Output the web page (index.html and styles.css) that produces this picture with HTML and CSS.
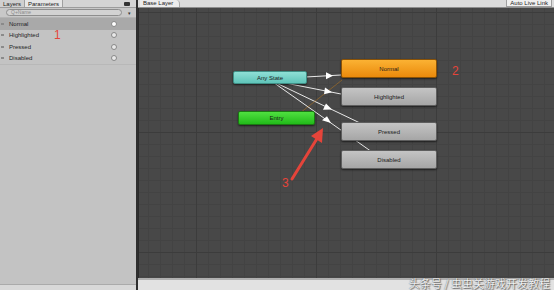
FILE: index.html
```html
<!DOCTYPE html>
<html>
<head>
<meta charset="utf-8">
<link rel="stylesheet" href="styles.css">
</head>
<body>
<div class="app">
  <aside class="left">
    <div class="tabbar">
      <span class="tab">Layers</span>
      <span class="tab active">Parameters</span>
      <span class="spacer"></span>
      <span class="eye"></span>
    </div>
    <div class="searchrow">
      <span class="search">Q+Name</span>
      <span class="plus">▾</span>
    </div>
    <div class="row selected"><span class="grip"></span><span class="name">Normal</span><span class="radio"></span></div>
    <div class="row"><span class="grip"></span><span class="name">Highlighted</span><span class="radio"></span></div>
    <div class="row"><span class="grip"></span><span class="name">Pressed</span><span class="radio"></span></div>
    <div class="row"><span class="grip"></span><span class="name">Disabled</span><span class="radio"></span></div>
    <div class="leftfill"></div>
    <div class="leftfoot"></div>
    <span class="mark mark1">1</span>
  </aside>
  <div class="divider"></div>
  <main class="right">
    <div class="topbar">
      <span class="layer">Base Layer</span>
      <span class="spacer"></span>
      <span class="live">Auto Live Link</span>
    </div>
    <div class="graph">
      <svg class="links" width="416" height="271" viewBox="138 8 416 271">
        <g stroke="#e8e8e8" stroke-width="1" fill="none">
          <line x1="270" y1="79" x2="341" y2="75"/>
          <line x1="270" y1="80" x2="341" y2="94"/>
          <line x1="270" y1="80" x2="360" y2="123"/>
          <line x1="270" y1="80" x2="372" y2="152"/>
        </g>
        <line x1="300" y1="113" x2="342" y2="80" stroke="#c07a1c" stroke-width="1" opacity="0.5"/>
        <g fill="#ffffff">
          <polygon points="333,75.8 326,72.2 326,79.2"/>
          <polygon points="332,92.2 325,87.4 324,94.2"/>
          <polygon points="332,109.6 326,103.5 323,109.8"/>
          <polygon points="331,123.1 327,116.2 322,120.3"/>
        </g>
        <g stroke="#e5443a" stroke-width="3" stroke-linecap="round">
          <line x1="292" y1="179" x2="318" y2="137"/>
        </g>
        <polygon points="323,128 322,143 311,136" fill="#e5443a"/>
      </svg>
      <div class="node any">Any State</div>
      <div class="node normal">Normal</div>
      <div class="node gray hl">Highlighted</div>
      <div class="node entry">Entry</div>
      <div class="node gray pressed">Pressed</div>
      <div class="node gray disabled">Disabled</div>
      <span class="mark mark2">2</span>
      <span class="mark mark3">3</span>
    </div>
    <div class="bottombar"></div>
    <span class="watermark">头条号 / 虫虫关游戏开发教程</span>
  </main>
</div>
</body>
</html>
```
FILE: styles.css
```css
* { box-sizing: border-box; }
html, body { margin: 0; padding: 0; }
body {
  width: 554px;
  height: 290px;
  overflow: hidden;
  font-family: "Liberation Sans", Arial, sans-serif;
  background: #c2c2c2;
}
.app {
  display: flex;
  width: 554px;
  height: 290px;
}
.left {
  position: relative;
  width: 136px;
  display: flex;
  flex-direction: column;
  background: #c3c3c3;
}
.tabbar {
  height: 8px;
  display: flex;
  align-items: stretch;
  background: #d4d4d4;
  border-bottom: 1px solid #9c9c9c;
  font-size: 6px;
  line-height: 8px;
  color: #222;
}
.tab {
  padding: 0 3px;
  border-right: 1px solid #a0a0a0;
  background: #d0d0d0;
}
.tab.active { background: #e6e6e6; }
.spacer { flex: 1; }
.eye {
  width: 6px;
  height: 4px;
  margin: 2px 6px 0 0;
  background: #333;
  border-radius: 1px;
}
.searchrow {
  height: 10px;
  display: flex;
  align-items: center;
  padding: 0 5px 0 6px;
  background: #c8c8c8;
  border-bottom: 1px solid #b4b4b4;
}
.search {
  flex: 1;
  height: 7px;
  border: 1px solid #8e8e8e;
  border-radius: 4px;
  background: #d2d2d2;
  font-size: 5px;
  line-height: 5px;
  color: #8a8a8a;
  padding-left: 4px;
}
.plus {
  font-size: 5px;
  color: #333;
  margin-left: 6px;
}
.row {
  height: 11.5px;
  display: flex;
  align-items: center;
  font-size: 6px;
  color: #1e1e1e;
  padding-right: 19px;
}
.row.selected { background: #a9a9a9; }
.grip {
  width: 3px;
  height: 2px;
  border-top: 1px solid #8a8a8a;
  border-bottom: 1px solid #8a8a8a;
  margin: 0 5px 0 1px;
}
.name { flex: 1; }
.radio {
  width: 6px;
  height: 6px;
  border-radius: 50%;
  border: 1px solid #888;
  background: #e8e8e8;
}
.row.selected .radio { background: #fff; }
.leftfill { flex: 1; border-top: 1px solid #b8b8b8; }
.leftfoot {
  height: 6px;
  background: #d8d8d8;
  border-top: 1px solid #aaaaaa;
}
.divider {
  width: 2px;
  background: #2e2e2e;
}
.right {
  position: relative;
  flex: 1;
  display: flex;
  flex-direction: column;
}
.topbar {
  height: 8px;
  display: flex;
  background: #dcdcdc;
  border-bottom: 1px solid #8e8e8e;
  font-size: 6px;
  line-height: 7px;
  color: #222;
}
.layer {
  margin-left: 2px;
  padding: 0 6px 0 3px;
  background: #ececec;
  border-right: 1px solid #a8a8a8;
  border-radius: 0 4px 0 0;
}
.live {
  margin-right: 2px;
  padding: 0 3px;
  background: #f0f0f0;
  border: 1px solid #a0a0a0;
  border-top: 0;
  line-height: 6px;
}
.graph {
  position: relative;
  flex: 1;
  background-color: #484848;
  background-image:
    linear-gradient(to right, #3c3c3c 1px, transparent 1px),
    linear-gradient(to bottom, #3c3c3c 1px, transparent 1px),
    linear-gradient(to right, #434343 1px, transparent 1px),
    linear-gradient(to bottom, #434343 1px, transparent 1px);
  background-size: 120px 120px, 120px 120px, 12px 12px, 12px 12px;
  background-position: 57px 4px, 57px 4px, 9px 4px, 9px 4px;
  border-left: 1px solid #2a2a2a;
  overflow: hidden;
}
.links {
  position: absolute;
  left: -1px;
  top: 0;
}
.node {
  position: absolute;
  font-size: 6px;
  color: #1a1a1a;
  display: flex;
  align-items: center;
  justify-content: center;
  border-radius: 2px;
  box-shadow: 0 1px 2px rgba(0,0,0,0.6);
}
.any {
  left: 94px; top: 63px; width: 74px; height: 13px;
  background: linear-gradient(#8fe0d6, #5fc4b9);
  border: 1px solid #3f8f86;
}
.normal {
  left: 202px; top: 51px; width: 96px; height: 19px;
  background: linear-gradient(#fbb233, #ea8a0c);
  border: 1px solid #8a5206;
}
.gray {
  left: 202px; width: 96px; height: 19px;
  background: linear-gradient(#c4c4c4, #a6a6a6);
  border: 1px solid #5e5e5e;
}
.hl { top: 79px; }
.pressed { top: 114px; }
.disabled { top: 142px; }
.entry {
  left: 99px; top: 103px; width: 77px; height: 14px;
  background: linear-gradient(#4fe040, #22bb1a);
  border: 1px solid #1a7a12;
}
.bottombar {
  height: 12px;
  background: #e2e2e2;
  border-top: 2px solid #b0b0b0;
}
.mark {
  position: absolute;
  font-family: "Liberation Sans", Arial, sans-serif;
  font-size: 12px;
  color: #e5443a;
  line-height: 12px;
}
.mark1 { left: 54px; top: 29px; }
.mark2 { left: 313px; top: 57px; }
.mark3 { left: 143px; top: 169px; }
.watermark {
  position: absolute;
  right: 4px;
  bottom: 0;
  font-family: "Noto Sans CJK SC", sans-serif;
  font-size: 11px;
  line-height: 13px;
  color: #f4f4f4;
  text-shadow: 0 0 1px #333, 1px 1px 1px #555;
  opacity: 0.85;
}
```
